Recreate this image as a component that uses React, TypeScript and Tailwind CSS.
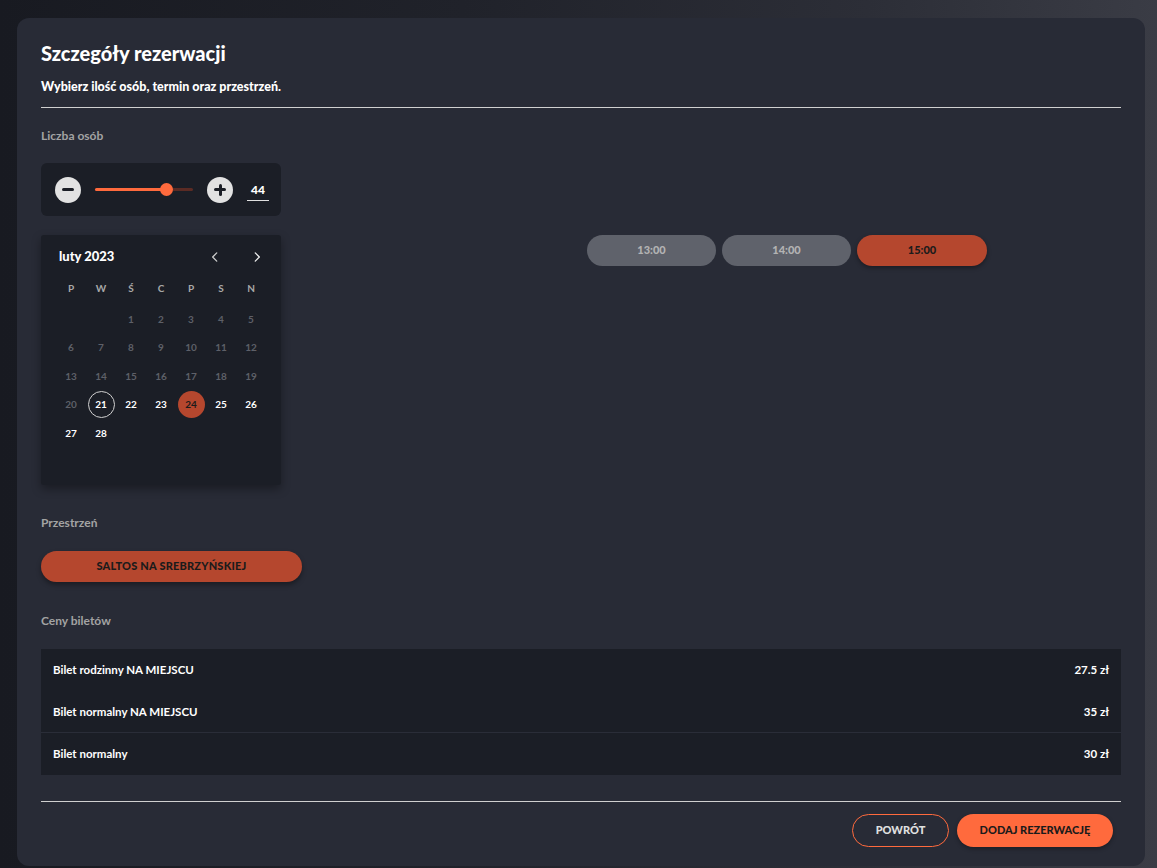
import React from "react";

const F = { fontFamily: "Lato, 'Noto Sans', sans-serif" };

function Calendar() {
  const heads = ["P", "W", "Ś", "C", "P", "S", "N"];
  const cells: (number | null)[] = [null, null, ...Array.from({ length: 28 }, (_, i) => i + 1)];
  while (cells.length < 35) cells.push(null);
  return (
    <div className="w-[240px] h-[250px] bg-[#1b1e26] rounded-[3px] shadow-[0_4px_10px_rgba(0,0,0,0.35)] px-[15px] pt-[13px]">
      <div className="flex items-center h-[18px]">
        <span className="text-[13px] font-black text-white ml-[3px]">luty 2023</span>
        <div className="ml-auto flex items-center gap-[28px] mr-[2px]">
          <svg width="14" height="14" viewBox="0 0 24 24" fill="none" stroke="#d0d0d0" strokeWidth="2.2" strokeLinecap="round" strokeLinejoin="round"><path d="M15 5l-7 7 7 7" /></svg>
          <svg width="14" height="14" viewBox="0 0 24 24" fill="none" stroke="#f0f0f0" strokeWidth="2.2" strokeLinecap="round" strokeLinejoin="round"><path d="M9 5l7 7-7 7" /></svg>
        </div>
      </div>
      <div className="grid grid-cols-7 mt-[14px]">
        {heads.map((h, i) => (
          <div key={i} className="h-[16px] flex items-center justify-center text-[10px] font-bold text-[#a8a8a8]">{h}</div>
        ))}
      </div>
      <div className="grid grid-cols-7 mt-[9px]">
        {cells.map((d, i) => {
          let cls = "text-[#5e6068]";
          let ring = "";
          if (d !== null && d >= 21) cls = "text-white";
          if (d === 21) ring = "border border-[#d0d0d0]";
          if (d === 24) { ring = "bg-[#b5472e]"; cls = "text-[#1b1b1b]"; }
          return (
            <div key={i} className="h-[28.5px] flex items-center justify-center">
              {d !== null && (
                <div className={`w-[27px] h-[27px] rounded-full flex items-center justify-center text-[10px] font-bold ${cls} ${ring}`}>{d}</div>
              )}
            </div>
          );
        })}
      </div>
    </div>
  );
}

export default function App() {
  return (
    <div style={F} className="w-[1157px] h-[868px] overflow-hidden bg-[linear-gradient(90deg,#181a21_0%,#20222a_40%,#2c2e37_75%,#3a3c45_100%)] pt-[18px] pl-[17px]">
      <div className="w-[1128px] h-[848px] bg-[#282b36] rounded-xl px-[24px] pt-[25px]">
        <h1 className="text-[20px] font-black text-white leading-[20px]">Szczegóły rezerwacji</h1>
        <p className="text-[12.5px] font-black text-white mt-[17px] leading-[14px]">Wybierz ilość osób, termin oraz przestrzeń.</p>
        <div className="h-px bg-[#d0d0d0] mt-[13px]" />
        <div className="text-[12px] font-bold text-[#a3a3a3] mt-[21px] leading-[14px]">Liczba osób</div>

        <div className="w-[240px] h-[53px] bg-[#1b1e26] rounded-[6px] mt-[20px] flex items-center pl-[14px]">
          <div className="w-[26px] h-[26px] rounded-full bg-[#e2e2e2] flex items-center justify-center">
            <div className="w-[12px] h-[3px] bg-[#1b1e26] rounded-sm" />
          </div>
          <div className="relative w-[98px] h-[3px] ml-[14px] bg-[#5b2b24] rounded">
            <div className="absolute left-0 top-0 h-[3px] w-[71px] bg-[#ff6a3d] rounded" />
            <div className="absolute left-[65px] top-[-5px] w-[13px] h-[13px] rounded-full bg-[#ff6a3d]" />
          </div>
          <div className="w-[26px] h-[26px] rounded-full bg-[#e2e2e2] flex items-center justify-center ml-[14px] relative">
            <div className="w-[12px] h-[3px] bg-[#1b1e26] rounded-sm" />
            <div className="absolute w-[3px] h-[12px] bg-[#1b1e26] rounded-sm" />
          </div>
          <div className="ml-[14px] w-[22px] border-b border-[#e0e0e0] text-center text-[12px] font-black text-white pb-[1px] mt-[2px]">44</div>
        </div>

        <div className="flex mt-[19px]">
          <Calendar />
          <div className="flex gap-[6px] ml-[306px] h-[31px]">
            <div className="w-[129px] h-[31px] rounded-full bg-[#5f626b] flex items-center justify-center text-[11px] font-black text-[#b3b3b3]">13:00</div>
            <div className="w-[129px] h-[31px] rounded-full bg-[#5f626b] flex items-center justify-center text-[11px] font-black text-[#b3b3b3]">14:00</div>
            <div className="w-[130px] h-[31px] rounded-full bg-[#b5472e] flex items-center justify-center text-[11px] font-black text-[#1b1b1b] shadow-[0_2px_4px_rgba(0,0,0,0.35)]">15:00</div>
          </div>
        </div>

        <div className="text-[12px] font-bold text-[#a3a3a3] mt-[31px] leading-[14px]">Przestrzeń</div>
        <div className="w-[261px] h-[31px] rounded-full bg-[#b5472e] mt-[21px] flex items-center justify-center text-[11px] font-black text-[#1b1b1b] shadow-[0_3px_5px_rgba(0,0,0,0.35)] tracking-[0.2px]">SALTOS NA SREBRZYŃSKIEJ</div>

        <div className="text-[12px] font-bold text-[#a3a3a3] mt-[32px] leading-[14px]">Ceny biletów</div>
        <div className="bg-[#1b1e26] mt-[21px]">
          <div className="h-[42px] flex items-center justify-between px-[12px] text-[11.5px] font-bold text-white"><span>Bilet rodzinny NA MIEJSCU</span><span>27.5 zł</span></div>
          <div className="h-[42px] flex items-center justify-between px-[12px] text-[11.5px] font-bold text-white border-b border-[#2a2d38]"><span>Bilet normalny NA MIEJSCU</span><span>35 zł</span></div>
          <div className="h-[42px] flex items-center justify-between px-[12px] text-[11.5px] font-bold text-white"><span>Bilet normalny</span><span>30 zł</span></div>
        </div>

        <div className="h-px bg-[#d0d0d0] mt-[26px]" />
        <div className="flex justify-end gap-[8px] mt-[12px] pr-[8px]">
          <div className="w-[97px] h-[33px] rounded-full border border-[#ff6a3d] flex items-center justify-center text-[11px] font-black text-[#e0e0e0]">POWRÓT</div>
          <div className="w-[156px] h-[33px] rounded-full bg-[#ff6a3d] flex items-center justify-center text-[11px] font-black text-[#1b1b1b] shadow-[0_2px_4px_rgba(0,0,0,0.3)]">DODAJ REZERWACJĘ</div>
        </div>
      </div>
    </div>
  );
}
